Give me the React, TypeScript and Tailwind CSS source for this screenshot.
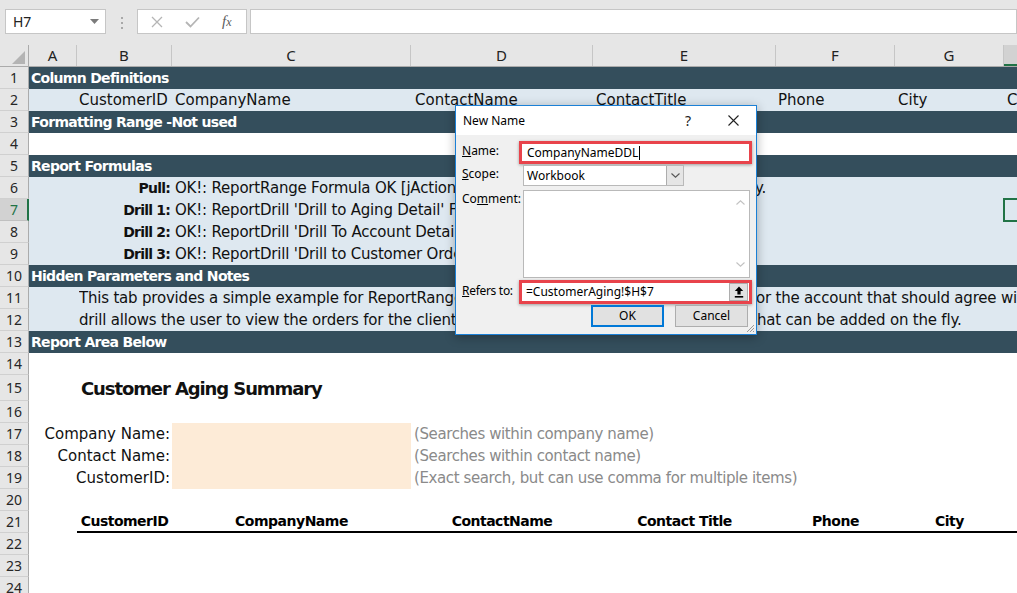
import React from "react";

const cA = "w-[48px] shrink-0";
const cB = "w-[95px] shrink-0";
const cC = "w-[239px] shrink-0";
const cD = "w-[182px] shrink-0";
const cE = "w-[183px] shrink-0";
const cF = "w-[119px] shrink-0";
const cG = "w-[109px] shrink-0";
const cH = "w-[120px] shrink-0";

const LIGHT = "bg-[#dee8f0]";
const DARK = "bg-[#344e5c]";

function RowHead({ n, active }: { n: number; active?: boolean }) {
  const base =
    "w-[29px] shrink-0 flex items-center justify-center border-b font-['Noto_Sans',sans-serif] text-[14px] leading-none";
  return active ? (
    <div className={base + " bg-[#d2d2d2] border-b-[#c0c0c0] border-r-2 border-r-[#217346] text-[#217346] pl-[1px]"}>{n}</div>
  ) : (
    <div className={base + " bg-[#e6e6e6] border-b-[#d0d0d0] border-r border-r-[#ababab] text-[#262626]"}>{n}</div>
  );
}

function Row({
  n,
  bg = "bg-white",
  h = "h-[22px]",
  active,
  children,
}: {
  n: number;
  bg?: string;
  h?: string;
  active?: boolean;
  children?: React.ReactNode;
}) {
  return (
    <div className={"flex shrink-0 " + h}>
      <RowHead n={n} active={active} />
      <div className={"flex flex-1 items-center min-w-0 whitespace-nowrap " + bg}>{children}</div>
    </div>
  );
}

function Section({ n, text }: { n: number; text: string }) {
  return (
    <Row n={n} bg={DARK}>
      <span className="pl-[2px] text-white font-bold text-[14px] tracking-[-0.7px]">{text}</span>
    </Row>
  );
}

function DrillRow({ n, label, text, tail, active }: { n: number; label: string; text: string; tail?: string; active?: boolean }) {
  return (
    <Row n={n} bg={LIGHT} active={active}>
      <div className={cA} />
      <div className={cB + " flex justify-end pr-[2px]"}>
        <span className="font-bold text-[14px] tracking-[-0.8px]">{label}</span>
      </div>
      <div className="flex pl-[3px] tracking-[-0.2px]">
        <span className="w-[580px] overflow-hidden">{text}</span>
        {tail && <span>{tail}</span>}
      </div>
    </Row>
  );
}

function TopBar() {
  return (
    <div className="h-[45px] bg-[#e6e6e6] flex items-start pt-[9px] font-['Noto_Sans',sans-serif]">
      <div className="ml-[5px] w-[101px] h-[25px] bg-white border border-[#c6c6c6] flex items-center justify-between pl-[7px] pr-[6px] text-[14px] text-[#222]">
        <span>H7</span>
        <svg width="9" height="5" viewBox="0 0 9 5">
          <path d="M0 0H9L4.5 5Z" fill="#7b7b7b" />
        </svg>
      </div>
      <div className="ml-[15px] mt-[8px] flex flex-col gap-[3px]">
        <div className="w-[2px] h-[2px] bg-[#a8a8a8]" />
        <div className="w-[2px] h-[2px] bg-[#a8a8a8]" />
        <div className="w-[2px] h-[2px] bg-[#a8a8a8]" />
      </div>
      <div className="ml-[14px] w-[110px] h-[25px] bg-white border border-[#c6c6c6] flex items-center">
        <svg className="ml-[13px]" width="12" height="12" viewBox="0 0 12 12">
          <path d="M1 1L11 11M11 1L1 11" stroke="#b5b5b5" strokeWidth="1.3" />
        </svg>
        <svg className="ml-[22px]" width="15" height="12" viewBox="0 0 15 12">
          <path d="M1 6L5.5 10.5L14 1.5" stroke="#b5b5b5" strokeWidth="1.8" fill="none" />
        </svg>
        <span className="ml-[22px] font-['Liberation_Serif',serif] italic text-[15px] text-[#5c5c5c] leading-none">
          f<span className="text-[12px]">x</span>
        </span>
      </div>
      <div className="ml-[3px] flex-1 h-[25px] bg-white border border-[#c6c6c6]" />
    </div>
  );
}

const heads: [string, string][] = [
  ["A", "w-[48px]"],
  ["B", "w-[95px]"],
  ["C", "w-[239px]"],
  ["D", "w-[182px]"],
  ["E", "w-[183px]"],
  ["F", "w-[119px]"],
  ["G", "w-[109px]"],
];

function HeaderRow() {
  return (
    <div className="flex h-[22px] bg-[#e6e6e6] border-b border-[#ababab] font-['Noto_Sans',sans-serif] text-[15px] text-[#222]">
      <div className="w-[29px] shrink-0 relative border-r border-[#ababab]">
        <svg className="absolute right-[3px] bottom-[2px]" width="13" height="13" viewBox="0 0 13 13">
          <path d="M13 0V13H0Z" fill="#b4b4b4" />
        </svg>
      </div>
      {heads.map(([l, w]) => (
        <div key={l} className={w + " shrink-0 flex items-center justify-center border-r border-[#c6c6c6]"}>
          {l}
        </div>
      ))}
      <div className="w-[120px] shrink-0 flex items-center justify-center bg-[#d2d2d2] border-b-2 border-[#217346] text-[#217346]">
        H
      </div>
    </div>
  );
}

function Chevron({ dir, color = "#a6a6a6" }: { dir: "up" | "down"; color?: string }) {
  return (
    <svg width="9" height="5" viewBox="0 0 9 5">
      <path d={dir === "up" ? "M0.5 4.5L4.5 0.8L8.5 4.5" : "M0.5 0.5L4.5 4.2L8.5 0.5"} stroke={color} strokeWidth="1.1" fill="none" />
    </svg>
  );
}

function Dialog() {
  return (
    <div className="absolute left-[455px] top-[105px] w-[302px] h-[230px] bg-[#f0f0f0] border border-[#1b80d6] shadow-[0_2px_10px_rgba(0,0,0,0.3)] font-['Segoe_UI','Noto_Sans',sans-serif] text-[12px] text-black">
      <div className="h-[29px] bg-white flex items-center pl-[7px] pr-[17px]">
        <span>New Name</span>
        <span className="ml-auto text-[14px] text-[#222]">?</span>
        <svg className="ml-[37px]" width="11" height="11" viewBox="0 0 11 11">
          <path d="M0.5 0.5L10.5 10.5M10.5 0.5L0.5 10.5" stroke="#222" strokeWidth="1.1" />
        </svg>
      </div>
      <div className="pl-[6px] flex flex-col">
        <div className="mt-[6px] flex items-start">
          <div className="w-[57px] pt-[1px]">
            <span className="underline">N</span>ame:
          </div>
          <div className="w-[233px] h-[23px] border-[3px] border-[#e8434b] bg-white flex items-center pl-[5px] shadow-[0_1px_3px_rgba(0,0,0,0.35)]">
            <span>CompanyNameDDL</span>
            <span className="w-px h-[14px] bg-black ml-[1px]" />
          </div>
        </div>
        <div className="mt-[1px] flex items-start">
          <div className="w-[61px]">
            <span className="underline">S</span>cope:
          </div>
          <div className="w-[161px] h-[21px] border border-[#b9b9b9] bg-white flex items-center">
            <span className="pl-[3px] flex-1">Workbook</span>
            <div className="w-[17px] h-full bg-[#e5e5e5] border-l border-[#adadad] flex items-center justify-center">
              <Chevron dir="down" color="#555" />
            </div>
          </div>
        </div>
        <div className="mt-[4px] flex items-start">
          <div className="w-[61px]">
            Co<span className="underline">m</span>ment:
          </div>
          <div className="w-[227px] h-[88px] bg-white border border-[#b9b9b9] flex justify-end">
            <div className="w-[17px] flex flex-col justify-between items-center pt-[9px] pb-[10px]">
              <Chevron dir="up" color="#c2c2c2" />
              <Chevron dir="down" color="#c2c2c2" />
            </div>
          </div>
        </div>
        <div className="mt-[2px] flex items-start">
          <div className="w-[57px] pt-[2px] tracking-[-0.3px]">
            <span className="underline">R</span>efers to:
          </div>
          <div className="w-[233px] h-[24px] border-[3px] border-[#e8434b] bg-white flex items-center pl-[4px] pr-[1px] shadow-[0_1px_3px_rgba(0,0,0,0.35)]">
            <span className="flex-1">=CustomerAging!$H$7</span>
            <div className="w-[19px] h-[18px] bg-[#e1e1e1] border border-[#adadad] flex items-center justify-center">
              <svg width="10" height="12" viewBox="0 0 10 12">
                <path d="M5 0.5L0.8 5H3.4V8.6H6.6V5H9.2Z" fill="#000" />
                <rect x="0.8" y="10" width="8.4" height="1.6" fill="#000" />
              </svg>
            </div>
          </div>
        </div>
        <div className="mt-[1px] flex pl-[129px]">
          <div className="w-[73px] h-[22px] bg-[#e1e1e1] border-2 border-[#0078d7] flex items-center justify-center">OK</div>
          <div className="ml-[11px] w-[73px] h-[22px] bg-[#e1e1e1] border border-[#adadad] flex items-center justify-center">
            Cancel
          </div>
        </div>
      </div>
      <svg className="absolute right-[1px] bottom-[1px]" width="10" height="10" viewBox="0 0 10 10">
        <path d="M9 2L2 9M9 5L5 9M9 8L8 9" stroke="#9a9a9a" strokeWidth="1" />
      </svg>
    </div>
  );
}

export default function App() {
  return (
    <div className="relative w-[1017px] h-[593px] overflow-hidden bg-white select-none">
      <TopBar />
      <HeaderRow />
      <div className="flex flex-col font-['DejaVu_Sans',sans-serif] text-[15px] text-[#111]">
        <Section n={1} text="Column Definitions" />
        <Row n={2} bg={LIGHT}>
          <div className={cA} />
          <div className={cB + " pl-[2px]"}>CustomerID</div>
          <div className={cC + " pl-[3px]"}>CompanyName</div>
          <div className={cD + " pl-[4px]"}>ContactName</div>
          <div className={cE + " pl-[3px]"}>ContactTitle</div>
          <div className={cF + " pl-[2px]"}>Phone</div>
          <div className={cG + " pl-[3px]"}>City</div>
          <div className={cH + " pl-[3px]"}>Country</div>
        </Row>
        <Section n={3} text="Formatting Range -Not used" />
        <Row n={4} />
        <Section n={5} text="Report Formulas" />
        <DrillRow
          n={6}
          label="Pull:"
          text="OK!: ReportRange Formula OK [jActions] - the report range will refresh and update the data automatically and correctl"
          tail="y."
        />
        <DrillRow n={7} active label="Drill 1:" text="OK!: ReportDrill 'Drill to Aging Detail' Formula OK" />
        <DrillRow n={8} label="Drill 2:" text="OK!: ReportDrill 'Drill To Account Detail' Formula OK" />
        <DrillRow n={9} label="Drill 3:" text="OK!: ReportDrill 'Drill to Customer Orders' Formula OK" />
        <Section n={10} text="Hidden Parameters and Notes" />
        <Row n={11} bg={LIGHT}>
          <div className={cA} />
          <div className="flex pl-[2px] tracking-[-0.2px]">
            <span className="w-[677px] overflow-hidden">
              This tab provides a simple example for ReportRange with drills. The first drill shows the aging detail f
            </span>
            <span>or the account that should agree with the summary.</span>
          </div>
        </Row>
        <Row n={12} bg={LIGHT}>
          <div className={cA} />
          <div className="flex pl-[2px] tracking-[-0.2px]">
            <span className="w-[678px] overflow-hidden">
              drill allows the user to view the orders for the clients. It also shows parameters t
            </span>
            <span>hat can be added on the fly.</span>
          </div>
        </Row>
        <Section n={13} text="Report Area Below" />
        <Row n={14} />
        <Row n={15} h="h-[26px]">
          <div className={cA} />
          <div className="pl-[4px] font-bold text-[18px] tracking-[-1.1px]">Customer Aging Summary</div>
        </Row>
        <Row n={16} />
        {[
          [17, "Company Name:", "(Searches within company name)"],
          [18, "Contact Name:", "(Searches within contact name)"],
          [19, "CustomerID:", "(Exact search, but can use comma for multiple items)"],
        ].map(([n, l, hint]) => (
          <Row key={n as number} n={n as number}>
            <div className={cA} />
            <div className={cB + " flex justify-end pr-[2px]"}>
              <span className="shrink-0">{l}</span>
            </div>
            <div className={cC + " self-stretch bg-[#fdebd7]"} />
            <div className={cD + " pl-[3px] text-[#8a8a8a] tracking-[-0.4px]"}>{hint}</div>
          </Row>
        ))}
        <Row n={20} />
        <Row n={21}>
          <div className={cA} />
          <div className="flex self-stretch items-center border-b-2 border-black font-bold text-[14px] tracking-[-0.5px] text-black">
            <div className={cB + " text-center"}>CustomerID</div>
            <div className={cC + " text-center"}>CompanyName</div>
            <div className={cD + " text-center"}>ContactName</div>
            <div className={cE + " text-center"}>Contact Title</div>
            <div className={cF + " text-center"}>Phone</div>
            <div className={cG + " text-center"}>City</div>
            <div className={cH} />
          </div>
        </Row>
        <Row n={22} />
        <Row n={23} />
        <Row n={24} />
      </div>
      <div className="absolute left-[1003px] top-[198px] w-[30px] h-[24px] border-2 border-[#217346]" />
      <Dialog />
    </div>
  );
}
